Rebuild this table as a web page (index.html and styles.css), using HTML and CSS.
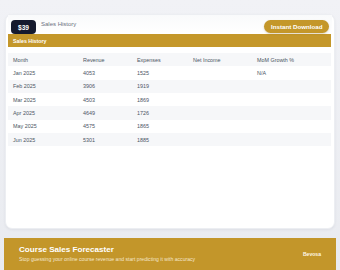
FILE: index.html
```html
<!DOCTYPE html>
<html lang="en">
<head>
<meta charset="utf-8">
<title>Course Sales Forecaster</title>
<link rel="stylesheet" href="styles.css">
</head>
<body>
<div class="page">
  <section class="card">
    <header class="card-head">
      <span class="price">$39</span>
      <span class="title">Sales History</span>
      <span class="spacer"></span>
      <a class="btn">Instant Download</a>
    </header>
    <div class="bar">Sales History</div>
    <table class="tbl">
      <colgroup>
        <col class="c1"><col class="c2"><col class="c3"><col class="c4"><col>
      </colgroup>
      <thead>
        <tr><th>Month</th><th>Revenue</th><th>Expenses</th><th>Net Income</th><th>MoM Growth %</th></tr>
      </thead>
      <tbody>
        <tr><td>Jan 2025</td><td>4053</td><td>1525</td><td></td><td>N/A</td></tr>
        <tr><td>Feb 2025</td><td>3906</td><td>1919</td><td></td><td></td></tr>
        <tr><td>Mar 2025</td><td>4503</td><td>1869</td><td></td><td></td></tr>
        <tr><td>Apr 2025</td><td>4649</td><td>1726</td><td></td><td></td></tr>
        <tr><td>May 2025</td><td>4575</td><td>1865</td><td></td><td></td></tr>
        <tr><td>Jun 2025</td><td>5301</td><td>1885</td><td></td><td></td></tr>
      </tbody>
    </table>
  </section>
  <footer class="foot">
    <div class="foot-text">
      <h1 class="foot-title">Course Sales Forecaster</h1>
      <p class="foot-sub">Stop guessing your online course revenue and start predicting it with accuracy</p>
    </div>
    <span class="brand">Bevosa</span>
  </footer>
</div>
</body>
</html>
```
FILE: styles.css
```css
html, body {
  margin: 0;
  padding: 0;
  overflow: hidden;
}
body {
  font-family: "Liberation Sans", Arial, sans-serif;
  background: linear-gradient(180deg, #f1f2f6 0%, #e9ebf0 100%);
  width: 340px;
  height: 270px;
}
.page {
  padding: 14px 4px 0 4px;
  display: flex;
  flex-direction: column;
}
.card {
  margin: 0 1px;
  height: 215px;
  box-sizing: border-box;
  background: #fff;
  border: 1px solid #eceef2;
  border-radius: 7px;
  box-shadow: 0 1px 3px rgba(20, 25, 45, 0.06);
  padding: 0 2px 0 2px;
}
.card-head {
  display: flex;
  align-items: flex-start;
  padding: 5px 3px 0 3px;
  height: 19px;
  box-sizing: border-box;
  background: linear-gradient(180deg, #f9fafb, #ffffff);
}
.price {
  width: 25px;
  height: 14px;
  background: #151a2e;
  color: #fff;
  font-weight: 700;
  font-size: 6.6px;
  border-radius: 4px;
  display: flex;
  align-items: center;
  justify-content: center;
  position: relative;
  z-index: 1;
}
.title {
  margin-left: 5px;
  font-size: 6px;
  line-height: 8px;
  color: #6b7280;
  font-weight: 400;
}
.spacer { flex: 1; }
.btn {
  height: 13px;
  padding: 0 6.5px;
  border-radius: 7px;
  background: #c4972a;
  color: #fff;
  font-weight: 700;
  font-size: 6.2px;
  display: flex;
  align-items: center;
  box-shadow: 0 1px 2px rgba(120, 90, 20, 0.25);
}
.bar {
  height: 13px;
  background: #c4972a;
  color: #fff;
  font-weight: 700;
  font-size: 5.3px;
  display: flex;
  align-items: center;
  padding-left: 5px;
  margin-right: 1px;
}
.tbl {
  margin-top: 6px;
  width: 323px;
  border-collapse: collapse;
  table-layout: fixed;
  font-size: 5.4px;
  color: #4b5563;
}
.c1 { width: 70px; }
.c2 { width: 54px; }
.c3 { width: 56px; }
.c4 { width: 64px; }
.tbl th, .tbl td {
  height: 13.33px;
  padding: 0 0 0 5px;
  text-align: left;
  font-weight: 400;
  vertical-align: middle;
  box-sizing: border-box;
}
.tbl thead tr { background: #f6f7f9; }
.tbl tbody tr:nth-child(even) { background: #f6f7f9; }
.tbl tbody tr:nth-child(odd) { background: #fff; }
.foot {
  margin-top: 9px;
  height: 32px;
  background: #c3962a;
  display: flex;
  align-items: center;
  padding: 0 15px;
}
.foot-text { flex: 1; }
.foot-title {
  margin: 0;
  font-size: 8.1px;
  font-weight: 700;
  color: #fff;
  line-height: 10px;
}
.foot-sub {
  margin: 1px 0 0 0;
  font-size: 5.1px;
  color: rgba(255, 248, 230, 0.85);
  line-height: 7px;
}
.brand {
  font-size: 5.1px;
  font-weight: 700;
  color: #fff8e6;
}
```
